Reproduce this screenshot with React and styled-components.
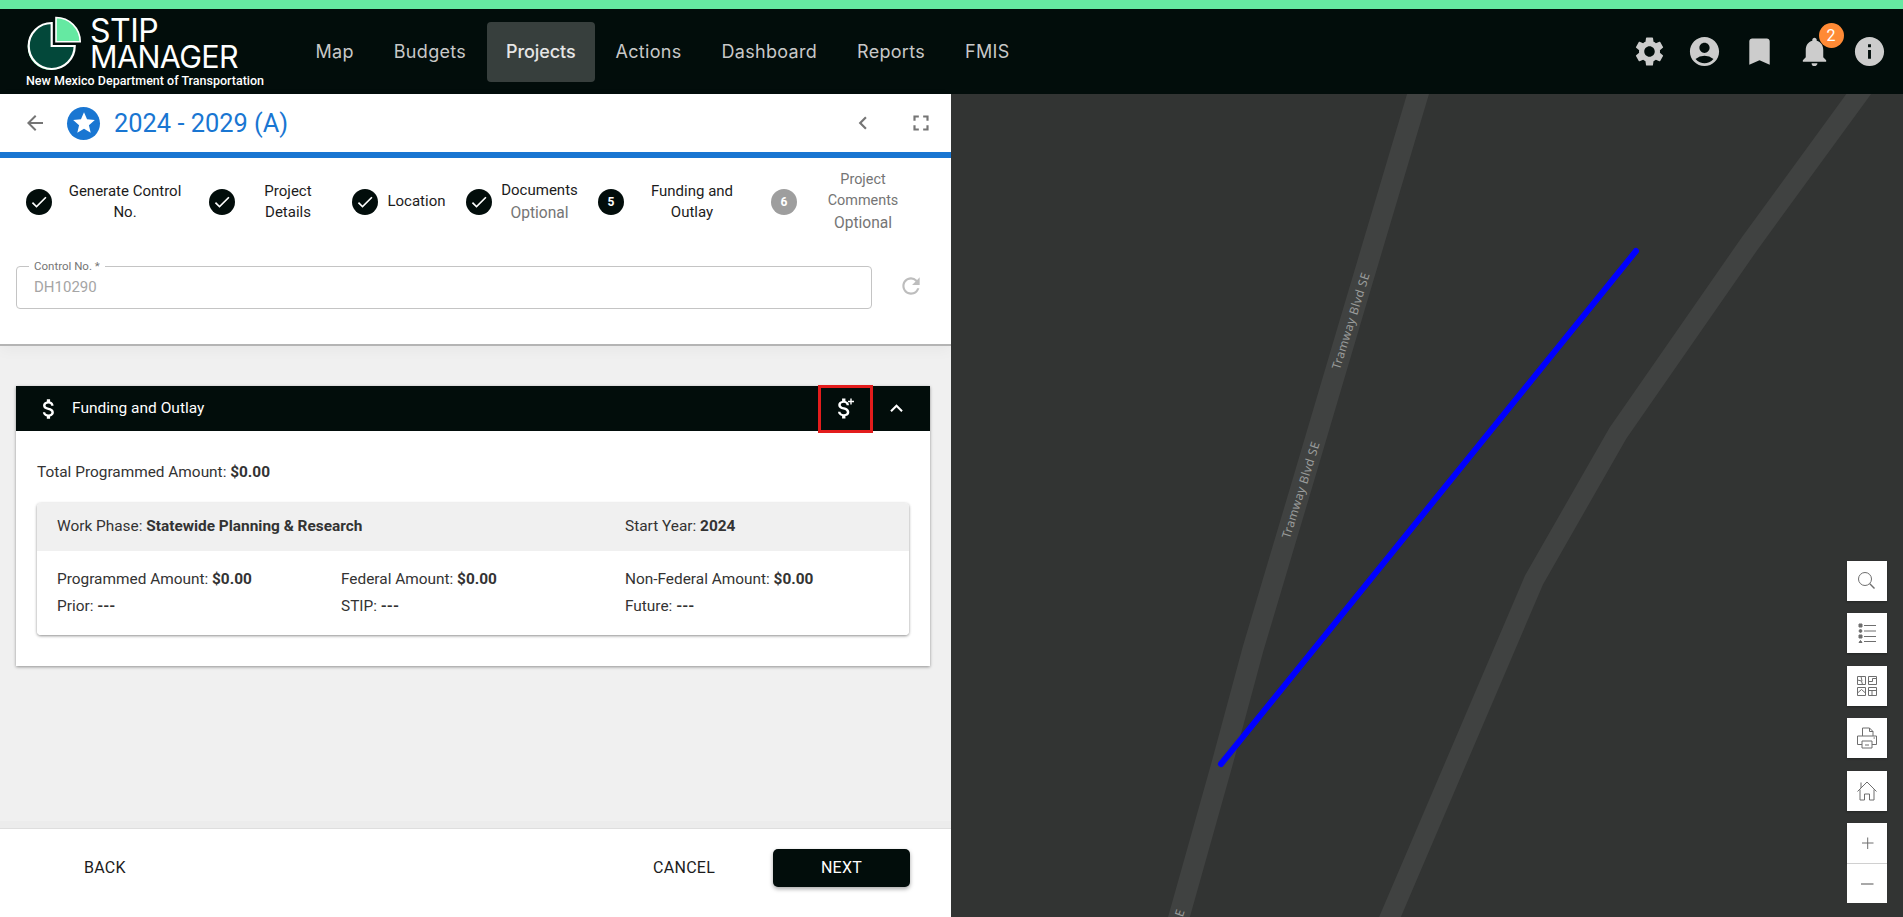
import React from 'react';
import styled, { createGlobalStyle } from 'styled-components';
import {
  MdSettings,
  MdAccountCircle,
  MdBookmark,
  MdNotifications,
  MdInfo,
  MdArrowBack,
  MdStar,
  MdChevronLeft,
  MdFullscreen,
  MdCheck,
  MdRefresh,
  MdAttachMoney,
  MdExpandLess,
} from 'react-icons/md';

const GlobalStyle = createGlobalStyle`
  * { box-sizing: border-box; }
  html, body { margin: 0; padding: 0; height: 100%; overflow: hidden; }
  body { font-family: Roboto, "Liberation Sans", sans-serif; font-size: 15.4px; color: #333; }
  button { font-family: inherit; border: 0; background: none; padding: 0; cursor: pointer; }
`;

const Page = styled.div`
  height: 100vh;
  display: flex;
  flex-direction: column;
  border-top: 9px solid #65e9a2;
`;

const TopBar = styled.header`
  height: 85px;
  flex: none;
  display: flex;
  align-items: center;
  background: #020d0b;
  padding: 0 16.5px 0 26px;
`;

const Brand = styled.div`
  width: 270px;
  align-self: flex-start;
  padding-top: 5px;
  color: #fff;
`;

const LogoRow = styled.div`
  display: flex;
  height: 60px;
`;

const LogoText = styled.div`
  margin: 2px 0 0 8px;
  font-family: Inter, sans-serif;
  font-weight: 400;
`;

const LogoTop = styled.div`
  font-size: 32px;
  line-height: 29px;
  letter-spacing: -0.5px;
`;

const LogoBottom = styled.div`
  font-size: 30.5px;
  line-height: 24px;
  letter-spacing: -0.6px;
`;

const Tagline = styled.div`
  font-size: 12.5px;
  line-height: 14px;
  font-weight: 500;
  white-space: nowrap;
`;

const Nav = styled.nav`
  display: flex;
  gap: 1px;
`;

const NavItem = styled.a`
  height: 60px;
  padding: 0 19.5px;
  display: flex;
  align-items: center;
  border-radius: 4px;
  font-family: Inter, sans-serif;
  font-size: 18px;
  letter-spacing: ${(p) => (p.$active ? '-0.1px' : '0.3px')};
  color: ${(p) => (p.$active ? '#e6e6e6' : '#c8c8c8')};
  font-weight: ${(p) => (p.$active ? 500 : 400)};
  background: ${(p) => (p.$active ? '#373f3d' : 'transparent')};
`;

const TopActions = styled.div`
  margin-left: auto;
  display: flex;
  gap: 20px;
  color: #cccccc;
  font-size: 35px;
  line-height: 0;
`;

const BellWrap = styled.div`
  position: relative;
`;

const Badge = styled.span`
  position: absolute;
  top: -11px;
  left: 22px;
  width: 25px;
  height: 25px;
  border-radius: 50%;
  background: #ff8a35;
  color: #fff;
  font-size: 16px;
  line-height: 25px;
  text-align: center;
`;

const Main = styled.main`
  flex: 1;
  min-height: 0;
  display: flex;
`;

const LeftPanel = styled.section`
  width: 951px;
  flex: none;
  display: flex;
  flex-direction: column;
  background: #f0f0f0;
`;

const TopCard = styled.div`
  position: relative;
  background: #fff;
  border-bottom: 2px solid #b4b4b4;
  padding-bottom: 35px;
  box-shadow: 0 4px 14px rgba(0, 0, 0, 0.04);
`;

const TitleBar = styled.div`
  height: 64px;
  display: flex;
  align-items: center;
  padding: 0 17px 0 23px;
  border-bottom: 6px solid #1976d2;
  color: #757575;
`;

const BackIcon = styled(MdArrowBack)`
  font-size: 24px;
`;

const StarBadge = styled.span`
  width: 33px;
  height: 33px;
  margin-left: 20px;
  border-radius: 50%;
  background: #1976d2;
  color: #fff;
  display: flex;
  align-items: center;
  justify-content: center;
  font-size: 26px;
`;

const Title = styled.h1`
  margin: 0 0 0 14px;
  font-size: 25.4px;
  font-weight: 400;
  color: #1976d2;
`;

const TitleTools = styled.div`
  margin-left: auto;
  display: flex;
  align-items: center;
  gap: 32px;
  font-size: 26px;
  line-height: 0;
`;

const Stepper = styled.ol`
  list-style: none;
  margin: 0;
  height: 88px;
  padding: 0 0 0 26px;
  display: flex;
  align-items: center;
  gap: 19px;
`;

const Step = styled.li`
  display: flex;
  align-items: center;
  gap: 8px;
`;

const StepDot = styled.span`
  width: 26px;
  height: 26px;
  flex: none;
  border-radius: 50%;
  background: ${(p) => (p.$muted ? '#9e9e9e' : '#020d0b')};
  color: #fff;
  font-size: 12px;
  font-weight: 700;
  display: flex;
  align-items: center;
  justify-content: center;
`;

const StepLabel = styled.div`
  width: ${(p) => p.$width}px;
  margin-top: -1px;
  text-align: center;
  font-size: ${(p) => (p.$muted ? 14.4 : 15)}px;
  line-height: 21px;
  color: ${(p) => (p.$muted ? '#757575' : '#1c1c1c')};
`;

const StepHint = styled.div`
  margin-top: 2px;
  font-size: 15.6px;
  color: #757575;
`;

const FieldRow = styled.div`
  margin-top: 20px;
  padding-left: 16px;
  display: flex;
  align-items: center;
`;

const Field = styled.div`
  position: relative;
  width: 856px;
  height: 43px;
  padding: 0 0 2px 17px;
  display: flex;
  align-items: center;
  border: 1px solid #c4c4c4;
  border-radius: 4px;
  font-size: 15px;
  color: #a5a5a5;
`;

const FieldLabel = styled.label`
  position: absolute;
  top: -7px;
  left: 12px;
  padding: 0 5px;
  background: #fff;
  font-size: 11.5px;
  line-height: 13px;
  color: #757575;
`;

const RefreshSlot = styled.div`
  width: 78px;
  margin-top: -4px;
  display: flex;
  justify-content: center;
  color: #bdbdbd;
  font-size: 26px;
  line-height: 0;
`;

const Content = styled.div`
  flex: 1;
  padding: 40px 21px 0 16px;
`;

const Panel = styled.article`
  background: #fff;
  box-shadow: 0 1px 3px rgba(0, 0, 0, 0.4);
`;

const PanelHead = styled.header`
  height: 45px;
  display: flex;
  align-items: center;
  padding: 0 11px 0 20px;
  background: #020d0b;
  color: #fff;
`;

const PanelIcon = styled(MdAttachMoney)`
  font-size: 26px;
  margin-right: 10px;
`;

const PanelTitle = styled.span`
  font-size: 15.5px;
  font-weight: 400;
  margin-top: -1px;
`;

const AddFunding = styled.button`
  margin: -1.5px 0 -1.5px auto;
  width: 55px;
  height: 48px;
  display: flex;
  align-items: center;
  justify-content: center;
  border: 3.5px solid #e31c1c;
  color: #fff;
`;

const Collapse = styled.button`
  width: 46px;
  color: #fff;
  font-size: 25px;
  line-height: 0;
`;

const PanelBody = styled.div`
  padding: 31px 21px;
`;

const Total = styled.div`
  line-height: 20px;
  margin-bottom: 21px;
`;

const PhaseCard = styled.div`
  border-radius: 4px;
  overflow: hidden;
  background: #fff;
  box-shadow: 0 1px 3px rgba(0, 0, 0, 0.45);
`;

const PhaseGrid = styled.div`
  display: grid;
  grid-template-columns: repeat(3, 284px);
  row-gap: 7px;
  padding: ${(p) => (p.$head ? '13px 20px 15px' : '18px 20px 19px')};
  background: ${(p) => (p.$head ? '#f0f0f0' : '#fff')};
  line-height: 20px;
`;

const Cell = styled.div`
  grid-column: span ${(p) => p.$span || 1};
  b { font-weight: 700; }
`;

const Footer = styled.footer`
  height: 89px;
  flex: none;
  display: flex;
  align-items: center;
  padding: 0 41px 11px 84px;
  background: #fff;
  border-top: 1px solid #dedede;
  box-shadow: 0 -7px 0 #ececec;
`;

const TextButton = styled.button`
  font-size: 16px;
  font-weight: 400;
  letter-spacing: 0.25px;
  color: #1c1c1c;
  margin-left: ${(p) => (p.$push ? 'auto' : 0)};
`;

const NextButton = styled.button`
  width: 137px;
  height: 38px;
  margin-left: 58px;
  border-radius: 5px;
  background: #020d0b;
  color: #fff;
  font-size: 16px;
  font-weight: 400;
  letter-spacing: 0.25px;
  box-shadow: 0 2px 4px rgba(0, 0, 0, 0.35);
`;

const MapArea = styled.section`
  flex: 1;
  position: relative;
  overflow: hidden;
  background: #323433;
`;

const MapCanvas = styled.svg`
  display: block;
  width: 100%;
  height: 100%;
`;

const RoadLabel = styled.text`
  font-family: "Noto Sans", sans-serif;
  font-size: 12px;
  letter-spacing: 0.4px;
  fill: #9a9c9b;
  text-anchor: middle;
`;

const MapTools = styled.div`
  position: absolute;
  right: 16px;
  bottom: 14px;
  display: flex;
  flex-direction: column;
  gap: 12.4px;
`;

const MapButton = styled.button`
  display: block;
  width: 40px;
  height: 40px;
  background: #fff;
  line-height: 0;
  border-top: ${(p) => (p.$divided ? '1px solid #d0d0d0' : 0)};
  box-shadow: ${(p) => (p.$flat ? 'none' : '0 1px 2px rgba(0, 0, 0, 0.3)')};
`;

const ToolIcon = styled.svg`
  width: 40px;
  height: 40px;
  fill: none;
  stroke: #6e6e6e;
  stroke-width: 1;
`;

const StipLogo = () => (
  <svg width="56" height="60" viewBox="0 0 56 60">
    <path d="M24.7 10A23 23 0 1 0 47.7 33H24.7Z" fill="#65e9a2" />
    <path d="M25.7 9A23 23 0 1 0 48.7 32H25.7Z" fill="#03483a" stroke="#fff" strokeWidth="2.2" />
    <path d="M30 3.5A24.2 24.2 0 0 1 54.2 27.7H30Z" fill="#65e9a2" stroke="#fff" strokeWidth="1.6" />
  </svg>
);

const DollarPlus = () => (
  <svg width="30" height="30" viewBox="0 0 30 30" fill="currentColor">
    <path
      transform="translate(0 1.2) scale(1.11)"
      d="M11.8 10.9c-2.27-.59-3-1.2-3-2.15 0-1.09 1.01-1.85 2.7-1.85 1.78 0 2.44.85 2.5 2.1h2.21c-.07-1.72-1.12-3.3-3.21-3.81V3h-3v2.16c-1.94.42-3.5 1.68-3.5 3.61 0 2.31 1.91 3.46 4.7 4.13 2.5.6 3 1.48 3 2.41 0 .69-.49 1.79-2.7 1.79-2.06 0-2.87-.92-2.98-2.1h-2.2c.12 2.19 1.76 3.42 3.68 3.83V21h3v-2.15c1.95-.37 3.5-1.5 3.5-3.55 0-2.84-2.43-3.81-4.7-4.4z"
    />
    <path d="M17 7.5h6M20 4.5v6" stroke="currentColor" strokeWidth="1.4" fill="none" />
  </svg>
);

const SearchIcon = () => (
  <ToolIcon viewBox="0 0 40 40">
    <circle cx="18" cy="18" r="6.5" />
    <path d="M22.8 22.8L27.5 27.5" strokeWidth="1.4" />
  </ToolIcon>
);

const LegendIcon = () => (
  <ToolIcon viewBox="0 0 40 40">
    <path d="M12 11h3v3h-3zM12 22h3v3h-3z" fill="#6e6e6e" />
    <circle cx="13.5" cy="18" r="1.4" fill="#6e6e6e" />
    <path d="M12 29.5h3l-1.5-2z" fill="#6e6e6e" />
    <path d="M17 12.5h12M17 18h12M17 23.5h12M17 28.5h12" />
  </ToolIcon>
);

const BasemapIcon = () => (
  <ToolIcon viewBox="0 0 40 40" strokeWidth="1.2">
    <path d="M10.5 10.5h8v8h-8zM21.5 10.5h8v8h-8zM10.5 21.5h8v8h-8zM21.5 21.5h8v8h-8z" />
    <path d="M10.5 14l4 1 1 3.5M14 10.5l1 4.5M21.5 15.5h4v-3h4M10.5 27l4-3.5 4 3.5M21.5 24.5h8M25 24.5v5" />
  </ToolIcon>
);

const PrintIcon = () => (
  <ToolIcon viewBox="0 0 40 40">
    <path d="M15.5 18v-8h7l3.5 3.5V18M22.5 10v3.5H26" />
    <path d="M15 26.5h-4.5V18h19v8.5H25" />
    <path d="M15 23h10v7H15zM18 27h4" />
    <path d="M26.5 20h1.5" />
  </ToolIcon>
);

const HomeIcon = () => (
  <ToolIcon viewBox="0 0 40 40">
    <path d="M10.5 20.5L20 11l9.5 9.5M14 17V11.5M13 18.5V29h4.5v-6h5v6H27V18.5" />
  </ToolIcon>
);

const PlusIcon = () => (
  <ToolIcon viewBox="0 0 40 40">
    <path d="M15 20h11.5M20.7 14.5v11.5" />
  </ToolIcon>
);

const MinusIcon = () => (
  <ToolIcon viewBox="0 0 40 40">
    <path d="M14 20h12.5" strokeWidth="1.2" />
  </ToolIcon>
);

const navItems = ['Map', 'Budgets', 'Projects', 'Actions', 'Dashboard', 'Reports', 'FMIS'];

const steps = [
  { width: 130, lines: ['Generate Control', 'No.'], done: true },
  { width: 90, lines: ['Project', 'Details'], done: true },
  { width: 61, lines: ['Location'], done: true },
  { width: 79, lines: ['Documents'], hint: 'Optional', done: true },
  { width: 120, lines: ['Funding and', 'Outlay'], number: 5 },
  { width: 116, lines: ['Project', 'Comments'], hint: 'Optional', number: 6, muted: true },
];

const mapTools = [SearchIcon, LegendIcon, BasemapIcon, PrintIcon, HomeIcon];

export default function App() {
  return (
    <>
      <GlobalStyle />
      <Page>
        <TopBar>
          <Brand>
            <LogoRow>
              <StipLogo />
              <LogoText>
                <LogoTop>STIP</LogoTop>
                <LogoBottom>MANAGER</LogoBottom>
              </LogoText>
            </LogoRow>
            <Tagline>New Mexico Department of Transportation</Tagline>
          </Brand>
          <Nav>
            {navItems.map((item) => (
              <NavItem key={item} $active={item === 'Projects'}>{item}</NavItem>
            ))}
          </Nav>
          <TopActions>
            <MdSettings />
            <MdAccountCircle />
            <MdBookmark />
            <BellWrap>
              <MdNotifications />
              <Badge>2</Badge>
            </BellWrap>
            <MdInfo />
          </TopActions>
        </TopBar>

        <Main>
          <LeftPanel>
            <TopCard>
              <TitleBar>
                <BackIcon />
                <StarBadge><MdStar /></StarBadge>
                <Title>2024 - 2029 (A)</Title>
                <TitleTools>
                  <MdChevronLeft />
                  <MdFullscreen />
                </TitleTools>
              </TitleBar>

              <Stepper>
                {steps.map((step) => (
                  <Step key={step.lines[0] + step.width}>
                    <StepDot $muted={step.muted}>
                      {step.done ? <MdCheck size={20} /> : step.number}
                    </StepDot>
                    <StepLabel $width={step.width} $muted={step.muted}>
                      {step.lines.map((line) => <div key={line}>{line}</div>)}
                      {step.hint && <StepHint>{step.hint}</StepHint>}
                    </StepLabel>
                  </Step>
                ))}
              </Stepper>

              <FieldRow>
                <Field>
                  <FieldLabel>Control No. *</FieldLabel>
                  DH10290
                </Field>
                <RefreshSlot><MdRefresh /></RefreshSlot>
              </FieldRow>
            </TopCard>

            <Content>
              <Panel>
                <PanelHead>
                  <PanelIcon />
                  <PanelTitle>Funding and Outlay</PanelTitle>
                  <AddFunding><DollarPlus /></AddFunding>
                  <Collapse><MdExpandLess /></Collapse>
                </PanelHead>
                <PanelBody>
                  <Total>Total Programmed Amount: <b>$0.00</b></Total>
                  <PhaseCard>
                    <PhaseGrid $head>
                      <Cell $span={2}>Work Phase: <b>Statewide Planning &amp; Research</b></Cell>
                      <Cell>Start Year: <b>2024</b></Cell>
                    </PhaseGrid>
                    <PhaseGrid>
                      <Cell>Programmed Amount: <b>$0.00</b></Cell>
                      <Cell>Federal Amount: <b>$0.00</b></Cell>
                      <Cell>Non-Federal Amount: <b>$0.00</b></Cell>
                      <Cell>Prior: <b>---</b></Cell>
                      <Cell>STIP: <b>---</b></Cell>
                      <Cell>Future: <b>---</b></Cell>
                    </PhaseGrid>
                  </PhaseCard>
                </PanelBody>
              </Panel>
            </Content>

            <Footer>
              <TextButton>BACK</TextButton>
              <TextButton $push>CANCEL</TextButton>
              <NextButton>NEXT</NextButton>
            </Footer>
          </LeftPanel>

          <MapArea>
            <MapCanvas viewBox="0 0 952 823" preserveAspectRatio="none">
              <g fill="none" stroke="#404241">
                <path strokeWidth="21" d="M470 -10L400 225L350 394L302 555L271 670L226 830" />
                <path strokeWidth="20" d="M915 -10L799 149L667 339L583 486L436 830" />
              </g>
              <RoadLabel transform="translate(400 227) rotate(-72.5)" dy="4">Tramway Blvd SE</RoadLabel>
              <RoadLabel transform="translate(350 396) rotate(-72.5)" dy="4">Tramway Blvd SE</RoadLabel>
              <RoadLabel transform="translate(229 819) rotate(-72.5)" dy="4">E</RoadLabel>
              <path d="M685 157L270 670" stroke="#0000ff" strokeWidth="6" strokeLinecap="round" fill="none" />
            </MapCanvas>
            <MapTools>
              {mapTools.map((Icon, i) => (
                <MapButton key={i}><Icon /></MapButton>
              ))}
              <div>
                <MapButton><PlusIcon /></MapButton>
                <MapButton $divided $flat><MinusIcon /></MapButton>
              </div>
            </MapTools>
          </MapArea>
        </Main>
      </Page>
    </>
  );
}
